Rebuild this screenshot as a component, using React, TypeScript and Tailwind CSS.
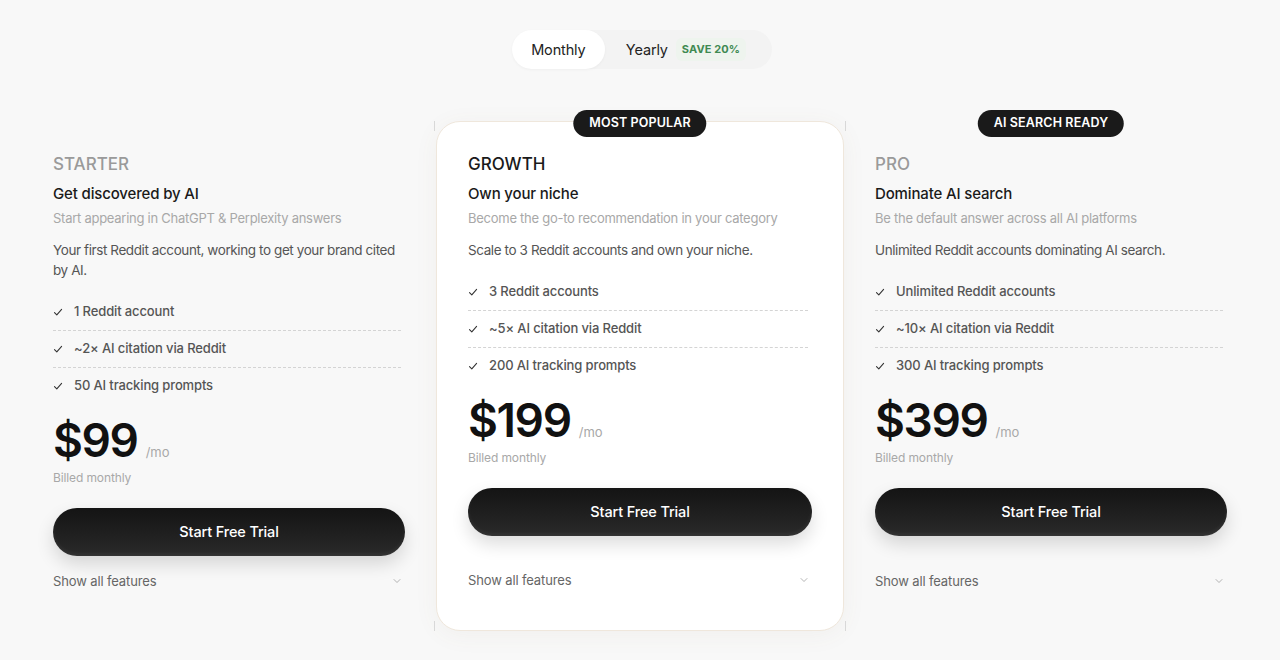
import { ChevronDown } from "lucide-react";

type Plan = {
  name: string;
  tagline: string;
  sub: string;
  desc: string;
  features: string[];
  price: string;
  badge?: string;
  featured?: boolean;
};

const plans: Plan[] = [
  {
    name: "Starter",
    tagline: "Get discovered by AI",
    sub: "Start appearing in ChatGPT & Perplexity answers",
    desc: "Your first Reddit account, working to get your brand cited by AI.",
    features: ["1 Reddit account", "~2× AI citation via Reddit", "50 AI tracking prompts"],
    price: "$99",
  },
  {
    name: "Growth",
    tagline: "Own your niche",
    sub: "Become the go-to recommendation in your category",
    desc: "Scale to 3 Reddit accounts and own your niche.",
    features: ["3 Reddit accounts", "~5× AI citation via Reddit", "200 AI tracking prompts"],
    price: "$199",
    badge: "Most Popular",
    featured: true,
  },
  {
    name: "Pro",
    tagline: "Dominate AI search",
    sub: "Be the default answer across all AI platforms",
    desc: "Unlimited Reddit accounts dominating AI search.",
    features: ["Unlimited Reddit accounts", "~10× AI citation via Reddit", "300 AI tracking prompts"],
    price: "$399",
    badge: "AI Search Ready",
  },
];

function Check() {
  return (
    <svg width="10" height="10" viewBox="0 0 10 10" fill="none" className="shrink-0">
      <path d="M1.5 5.6 L3.8 7.8 L8.6 2.4" stroke="#333" strokeWidth="1.1" strokeLinecap="round" strokeLinejoin="round" />
    </svg>
  );
}

function PlanCard({ plan }: { plan: Plan }) {
  const box = plan.featured
    ? "bg-white border border-[#efe7dc] rounded-[24px] px-[31px] pt-[31px] pb-[40px] shadow-[0_4px_24px_rgba(120,100,70,0.06)]"
    : "px-7 pt-8 pb-10";

  return (
    <div className="relative flex">
      {plan.badge && (
        <div className="absolute left-1/2 -translate-x-1/2 -top-[11px] z-10 h-[27px] px-4 rounded-full bg-[#1a1a1a] text-white text-[12.5px] font-semibold uppercase tracking-[0.01em] flex items-center whitespace-nowrap">
          {plan.badge}
        </div>
      )}
      {plan.featured && (
        <>
          <span className="absolute -left-[2px] top-0 w-px h-[10px] bg-[#d8d8d8]" />
          <span className="absolute -right-[2px] top-0 w-px h-[10px] bg-[#d8d8d8]" />
          <span className="absolute -left-[2px] bottom-0 w-px h-[10px] bg-[#d8d8d8]" />
          <span className="absolute -right-[2px] bottom-0 w-px h-[10px] bg-[#d8d8d8]" />
        </>
      )}
      <div className={`flex flex-col w-full ${box}`}>
        <div
          className={`text-[17px] leading-[22px] uppercase font-medium ${
            plan.featured ? "text-[#1a1a1a]" : "text-[#9a9a9a]"
          }`}
        >
          {plan.name}
        </div>
        <div className="mt-[8px] text-[15px] leading-[22px] font-medium text-[#1a1a1a] tracking-[-0.01em]">
          {plan.tagline}
        </div>
        <div className="mt-[4px] text-[13px] leading-[18px] text-[#a8a8a8] tracking-[-0.02em]">{plan.sub}</div>
        <div className="mt-[13px] text-[13.5px] leading-[20px] text-[#555] tracking-[-0.03em]">{plan.desc}</div>

        <ul className="mt-[14px]">
          {plan.features.map((f, i) => (
            <li
              key={f}
              className={`flex items-center gap-[11px] text-[13px] font-medium text-[#555] tracking-[-0.01em] ${
                i < plan.features.length - 1 ? "h-[37px] border-b border-dashed border-[#d4d4d4] mr-1" : "h-[36px]"
              }`}
            >
              <Check />
              {f}
            </li>
          ))}
        </ul>

        <div className="mt-[12px] flex items-end gap-[8px]">
          <span className="text-[46px] leading-[48px] font-semibold text-[#111] tracking-[-0.03em]">{plan.price}</span>
          <span className="text-[13px] text-[#a8a8a8] mb-[2px]">/mo</span>
        </div>
        <div className="mt-[5px] text-[12px] leading-[18px] text-[#a8a8a8] tracking-[-0.01em]">Billed monthly</div>

        <button className="mt-[21px] h-12 w-full shrink-0 rounded-full bg-gradient-to-b from-[#141414] to-[#2a2a2a] text-white text-[14.5px] font-medium tracking-[-0.01em] shadow-[0_8px_18px_rgba(0,0,0,0.14),inset_0_-2px_4px_rgba(255,255,255,0.06)]">
          Start Free Trial
        </button>

        <div className="mt-auto pt-[15px] flex items-center justify-between">
          <span className="text-[13px] leading-[20px] text-[#666] tracking-[-0.01em]">Show all features</span>
          <ChevronDown size={12} strokeWidth={1.25} className="text-[#888] mr-[2px]" />
        </div>
      </div>
    </div>
  );
}

export default function App() {
  return (
    <div className="min-h-[660px] bg-[#f8f8f8] pt-[30px]" style={{ fontFamily: "Inter, 'Liberation Sans', sans-serif" }}>
      <div className="flex justify-center">
        <div className="flex items-center h-[39px] rounded-full bg-[#f3f3f3] pr-[26px] ml-[4px]">
          <button className="h-[39px] w-[93px] rounded-full bg-white text-[14.5px] text-[#222] tracking-[-0.01em] shadow-[0_1px_3px_rgba(0,0,0,0.04)]">
            Monthly
          </button>
          <span className="ml-[21px] text-[14.5px] text-[#222] tracking-[-0.01em]">Yearly</span>
          <span className="ml-[8px] px-[6px] py-[3px] rounded-md bg-[#eef4ee] text-[11px] font-bold text-[#3f8a52] tracking-[0.01em]">
            SAVE 20%
          </span>
        </div>
      </div>

      <div className="mt-[52px] mx-auto w-[1230px] grid grid-cols-3 gap-[3px]">
        {plans.map((p) => (
          <PlanCard key={p.name} plan={p} />
        ))}
      </div>
    </div>
  );
}
